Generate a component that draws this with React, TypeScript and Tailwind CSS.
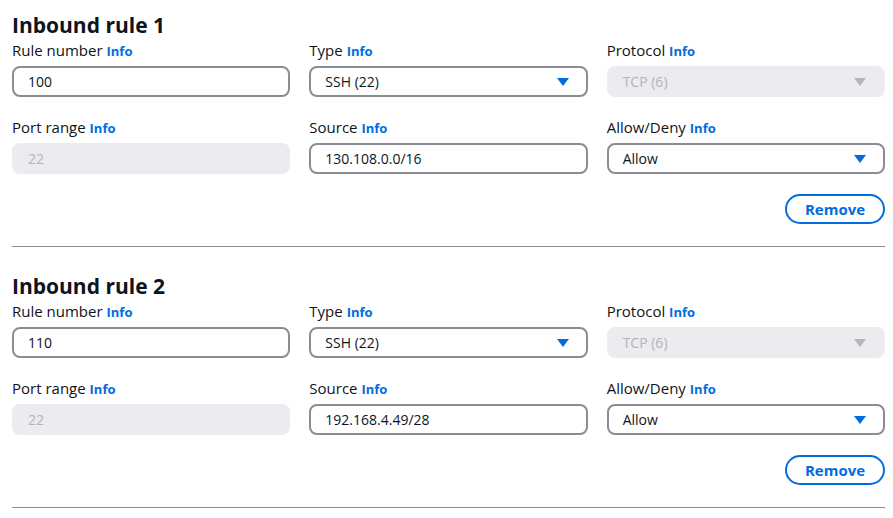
const rules = [
  { n: 1, number: '100', source: '130.108.0.0/16' },
  { n: 2, number: '110', source: '192.168.4.49/28' },
];

const Caret = ({ disabled }: { disabled?: boolean }) => (
  <svg width="12" height="8" viewBox="0 0 12 8" className="shrink-0">
    <polygon points="0,0 12,0 6,8" fill={disabled ? '#b4b4bb' : '#006ce0'} />
  </svg>
);

const Label = ({ text }: { text: string }) => (
  <div className="h-5 text-[15px] leading-5 text-[#0f141a]">
    {text} <span className="text-[13px] leading-none font-bold text-[#006ce0]">Info</span>
  </div>
);

const Field = ({
  label,
  value,
  select,
  disabled,
}: {
  label: string;
  value: string;
  select?: boolean;
  disabled?: boolean;
}) => (
  <div>
    <Label text={label} />
    <div
      className={
        disabled
          ? 'mt-1.5 flex h-[31px] items-center justify-between rounded-lg border-2 border-[#ebebf0] bg-[#ebebf0] pl-[14px] pr-[17px] text-sm text-[#b4b4bb]'
          : 'mt-1.5 flex h-[31px] items-center justify-between rounded-lg border-2 border-[#8c8c94] bg-white pl-[14px] pr-[17px] text-sm text-[#0f141a]'
      }
    >
      <span>{value}</span>
      {select && <Caret disabled={disabled} />}
    </div>
  </div>
);

export default function App() {
  return (
    <div
      className="min-h-screen bg-white pl-3 pr-2"
      style={{ fontFamily: '"Open Sans", "Noto Sans", sans-serif' }}
    >
      {rules.map((r, i) => (
        <div key={r.n} className={i === 0 ? 'pt-3' : 'pt-[26px]'}>
          <h2 className="text-[21px] leading-[26px] font-bold text-[#0f141a]">Inbound rule {r.n}</h2>
          <div className="mt-0.5 grid grid-cols-3 gap-x-[19px] gap-y-5">
            <Field label="Rule number" value={r.number} />
            <Field label="Type" value="SSH (22)" select />
            <Field label="Protocol" value="TCP (6)" select disabled />
            <Field label="Port range" value="22" disabled />
            <Field label="Source" value={r.source} />
            <Field label="Allow/Deny" value="Allow" select />
          </div>
          <div className="mt-5 flex justify-end">
            <button className="h-[30px] w-[100px] rounded-full border-2 border-[#006ce0] text-[15px] font-bold text-[#006ce0]">
              Remove
            </button>
          </div>
          <div className="mt-[22px] h-px bg-[#8c8c94]" />
        </div>
      ))}
    </div>
  );
}
